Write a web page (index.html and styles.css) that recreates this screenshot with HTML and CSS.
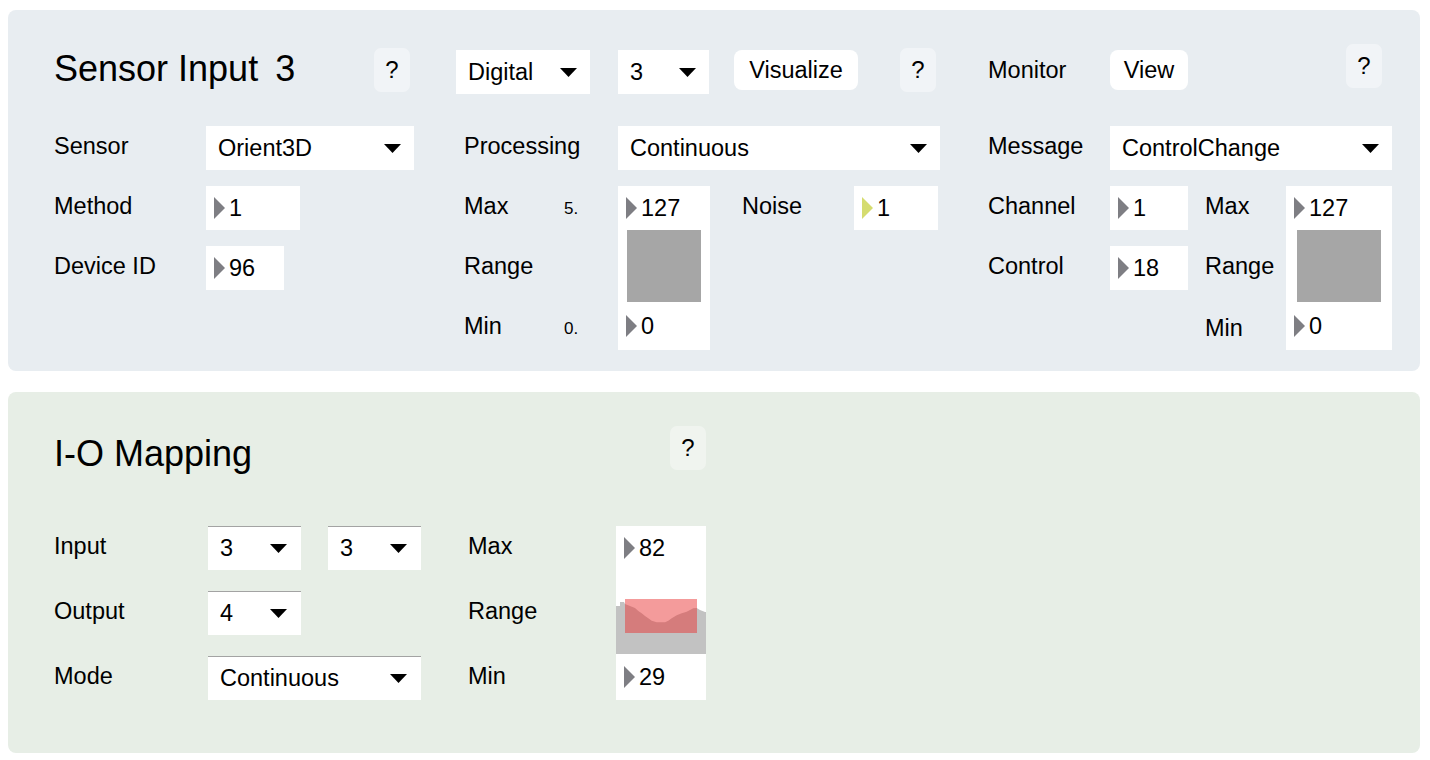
FILE: index.html
```html
<!DOCTYPE html>
<html>
<head>
<meta charset="utf-8">
<title>Sensor Input</title>
<link rel="stylesheet" href="styles.css">
</head>
<body>
<section class="panel panel-sensor">
  <div class="title-cell c1-2 r1">
    <h1 class="title">Sensor Input<span class="title-num">3</span></h1>
    <div class="help help-title">?</div>
  </div>
  <div class="dd hdr-ctl w134 c4 r1"><span>Digital</span><svg class="arrow" width="17" height="9" viewBox="0 0 17 9"><polygon points="0,0 17,0 8.5,9"/></svg></div>
  <div class="dd hdr-ctl w91 c5 r1"><span>3</span><svg class="arrow" width="17" height="9" viewBox="0 0 17 9"><polygon points="0,0 17,0 8.5,9"/></svg></div>
  <div class="btn btn-visualize c6 r1">Visualize</div>
  <div class="help help-mid c7 r1">?</div>
  <div class="lbl hdr-lbl c9 r1">Monitor</div>
  <div class="btn btn-view c10 r1">View</div>
  <div class="help help-right c11-12 r1">?</div>

  <div class="lbl c1 r2">Sensor</div>
  <div class="dd c2 r2"><span>Orient3D</span><svg class="arrow" width="17" height="9" viewBox="0 0 17 9"><polygon points="0,0 17,0 8.5,9"/></svg></div>
  <div class="lbl lbl-b c4 r2">Processing</div>
  <div class="dd c5-7 r2"><span>Continuous</span><svg class="arrow" width="17" height="9" viewBox="0 0 17 9"><polygon points="0,0 17,0 8.5,9"/></svg></div>
  <div class="lbl c9 r2">Message</div>
  <div class="dd c10-12 r2"><span>ControlChange</span><svg class="arrow" width="17" height="9" viewBox="0 0 17 9"><polygon points="0,0 17,0 8.5,9"/></svg></div>

  <div class="lbl c1 r3">Method</div>
  <div class="num w94 c2 r3"><svg class="tri" width="11" height="22" viewBox="0 0 11 22"><polygon points="0,0 11,11 0,22"/></svg><span>1</span></div>
  <div class="lbl lbl-b lbl-split c4 r3"><span class="lbl-name">Max</span><span class="small">5.</span></div>
  <div class="rbox c5 r3-5">
    <div class="num"><svg class="tri" width="11" height="22" viewBox="0 0 11 22"><polygon points="0,0 11,11 0,22"/></svg><span>127</span></div>
    <div class="sq sq-mid"></div>
    <div class="num num-fill"><svg class="tri" width="11" height="22" viewBox="0 0 11 22"><polygon points="0,0 11,11 0,22"/></svg><span>0</span></div>
  </div>
  <div class="lbl lbl-noise c6 r3">Noise</div>
  <div class="num num-noise w84 c7 r3"><svg class="tri" width="11" height="22" viewBox="0 0 11 22"><polygon points="0,0 11,11 0,22"/></svg><span>1</span></div>
  <div class="lbl c9 r3">Channel</div>
  <div class="num c10 r3"><svg class="tri" width="11" height="22" viewBox="0 0 11 22"><polygon points="0,0 11,11 0,22"/></svg><span>1</span></div>
  <div class="lbl lbl-out c11 r3">Max</div>
  <div class="rbox c12 r3-5">
    <div class="num"><svg class="tri" width="11" height="22" viewBox="0 0 11 22"><polygon points="0,0 11,11 0,22"/></svg><span>127</span></div>
    <div class="sq sq-out"></div>
    <div class="num num-fill"><svg class="tri" width="11" height="22" viewBox="0 0 11 22"><polygon points="0,0 11,11 0,22"/></svg><span>0</span></div>
  </div>

  <div class="lbl c1 r4">Device ID</div>
  <div class="num w78 c2 r4"><svg class="tri" width="11" height="22" viewBox="0 0 11 22"><polygon points="0,0 11,11 0,22"/></svg><span>96</span></div>
  <div class="lbl lbl-b c4 r4">Range</div>
  <div class="lbl c9 r4">Control</div>
  <div class="num c10 r4"><svg class="tri" width="11" height="22" viewBox="0 0 11 22"><polygon points="0,0 11,11 0,22"/></svg><span>18</span></div>
  <div class="lbl lbl-out c11 r4">Range</div>

  <div class="lbl lbl-b lbl-split c4 r5"><span class="lbl-name">Min</span><span class="small">0.</span></div>
  <div class="lbl lbl-out lbl-min-out c11 r5">Min</div>
</section>

<section class="panel panel-map">
  <h1 class="title title-map c1-3 r1">I-O Mapping</h1>
  <div class="help help-map c5 r1">?</div>

  <div class="lbl c1 r2">Input</div>
  <div class="pair c2 r2">
    <div class="dd dd-io w93"><span>3</span><svg class="arrow" width="17" height="9" viewBox="0 0 17 9"><polygon points="0,0 17,0 8.5,9"/></svg></div>
    <div class="dd dd-io w93"><span>3</span><svg class="arrow" width="17" height="9" viewBox="0 0 17 9"><polygon points="0,0 17,0 8.5,9"/></svg></div>
  </div>
  <div class="lbl c1 r3">Output</div>
  <div class="dd dd-io w93 c2 r3"><span>4</span><svg class="arrow" width="17" height="9" viewBox="0 0 17 9"><polygon points="0,0 17,0 8.5,9"/></svg></div>
  <div class="lbl c1 r4">Mode</div>
  <div class="dd dd-io c2 r4"><span>Continuous</span><svg class="arrow" width="17" height="9" viewBox="0 0 17 9"><polygon points="0,0 17,0 8.5,9"/></svg></div>

  <div class="lbl lbl-io c4 r2">Max</div>
  <div class="lbl lbl-io c4 r3">Range</div>
  <div class="lbl lbl-io c4 r4">Min</div>
  <div class="rbox rbox-io c5 r2-4">
    <div class="num"><svg class="tri" width="11" height="22" viewBox="0 0 11 22"><polygon points="0,0 11,11 0,22"/></svg><span>82</span></div>
    <div class="gap-28"></div>
    <svg class="graph" width="90" height="56" viewBox="0 0 90 56">
      <polygon class="graph-area" points="0,8 4,8 4,4 8,4 9,6 14,8 19,10 22.3,13 25.7,15.3 29,18 32.3,20.3 35.7,22.7 40.7,24.3 49,24.3 52.3,22.7 55.7,20.3 60.7,17.3 65.7,15.3 70.7,13.7 74,12 77.3,10.3 80.7,10 84,12 89,14 90,14 90,56 0,56"/>
      <rect class="graph-sel" x="9" y="1" width="72" height="34"/>
    </svg>
    <div class="num num-fill"><svg class="tri" width="11" height="22" viewBox="0 0 11 22"><polygon points="0,0 11,11 0,22"/></svg><span>29</span></div>
  </div>
</section>
</body>
</html>
```

FILE: styles.css
```css
* { box-sizing: border-box; }

body {
  margin: 8px;
  background: #ffffff;
  color: #000000;
  font-family: "Liberation Sans", Arial, Helvetica, sans-serif;
}

.panel {
  width: 1412px;
  border-radius: 8px;
  display: grid;
  padding-left: 46px;
}

.panel-sensor {
  margin-top: 2px;
  background: #e8edf1;
  padding-top: 40px;
  padding-bottom: 21px;
  grid-template-columns: 152px 208px 42px 162px 92px 144px 86px 48px 122px 78px 98px 106px;
  grid-template-rows: 60px 44px 44px 44px 44px;
  row-gap: 16px;
}

.panel-map {
  margin-top: 21px;
  background: #e7eee6;
  padding-top: 34px;
  padding-bottom: 53px;
  grid-template-columns: 154px 213px 47px 148px 90px;
  grid-template-rows: 79px 44px 44px 44px;
  row-gap: 21px;
}

/* grid placement */
.c1 { grid-column: 1; }
.c2 { grid-column: 2; }
.c4 { grid-column: 4; }
.c5 { grid-column: 5; }
.c6 { grid-column: 6; }
.c7 { grid-column: 7; }
.c9 { grid-column: 9; }
.c10 { grid-column: 10; }
.c11 { grid-column: 11; }
.c12 { grid-column: 12; }
.c1-2 { grid-column: 1 / 3; }
.c1-3 { grid-column: 1 / 4; }
.c5-7 { grid-column: 5 / 8; }
.c10-12 { grid-column: 10 / 13; }
.c11-12 { grid-column: 11 / 13; }
.r1 { grid-row: 1; }
.r2 { grid-row: 2; }
.r3 { grid-row: 3; }
.r4 { grid-row: 4; }
.r5 { grid-row: 5; }
.r3-5 { grid-row: 3 / 6; }
.r2-4 { grid-row: 2 / 5; }

/* widths */
.w78 { width: 78px; }
.w84 { width: 84px; }
.w91 { width: 91px; }
.w93 { width: 93px; }
.w94 { width: 94px; }
.w134 { width: 134px; }

/* title */
.title-cell {
  display: flex;
  align-items: flex-start;
  align-self: start;
}

.title {
  margin: -3px 0 0 0;
  font-size: 36px;
  line-height: 44px;
  font-weight: normal;
  white-space: nowrap;
}

.title-num { margin-left: 17px; }

.title-map {
  align-self: start;
  margin-top: 6px;
}

/* help buttons */
.help {
  width: 36px;
  height: 44px;
  border-radius: 7px;
  background: #f1f4f7;
  font-size: 24px;
  display: flex;
  align-items: center;
  justify-content: center;
  align-self: start;
}

.help-title { margin-left: auto; margin-right: 4px; margin-top: -2px; }
.help-mid { justify-self: end; margin-right: 4px; margin-top: -2px; }
.help-right { justify-self: end; margin-right: 10px; margin-top: -6px; }
.help-map { justify-self: end; background: #f0f4ef; }

/* buttons */
.btn {
  height: 40px;
  border-radius: 8px;
  background: #ffffff;
  font-size: 23.5px;
  display: flex;
  align-items: center;
  justify-content: center;
  align-self: start;
}

.btn-visualize { width: 124px; margin-left: 24px; }
.btn-view { width: 78px; }

/* labels */
.lbl {
  font-size: 23.5px;
  align-self: center;
  padding-bottom: 4px;
  white-space: nowrap;
}

.hdr-lbl {
  align-self: start;
  line-height: 44px;
  padding-bottom: 0;
  margin-top: -2px;
}

.lbl-b { padding-left: 8px; }
.lbl-noise { padding-left: 32px; }
.lbl-out { padding-left: 17px; }
.lbl-min-out { padding-bottom: 0; }

.lbl-split {
  display: flex;
  align-items: baseline;
}

.lbl-name { width: 100px; }

.small { font-size: 17px; }

/* dropdowns */
.dd {
  height: 44px;
  background: #ffffff;
  display: flex;
  align-items: center;
  justify-content: space-between;
  padding: 0 13px 0 12px;
  font-size: 23.5px;
  white-space: nowrap;
}

.hdr-ctl { align-self: start; }

.dd-io {
  border-top: 1px solid #a3a3a3;
  padding-right: 14px;
}

.arrow { fill: #000000; display: block; }

.pair {
  display: flex;
  gap: 27px;
}

/* numeric boxes */
.num {
  height: 44px;
  background: #ffffff;
  display: flex;
  align-items: center;
  font-size: 23.5px;
}

.tri {
  display: block;
  margin-left: 8px;
  margin-right: 4px;
  fill: #7e7e83;
  flex: none;
}

.num-noise .tri { fill: #d5dc6f; }

.rbox {
  background: #ffffff;
  display: flex;
  flex-direction: column;
}

.num-fill {
  flex: 1;
  height: auto;
}

.sq {
  height: 72px;
  background: #a6a6a6;
}

.sq-mid { margin: 0 9px; }
.sq-out { margin: 0 11px; }

.gap-28 { height: 28px; }

.graph { display: block; }
.graph-area { fill: #c2c2c2; }
.graph-sel { fill: rgb(233, 50, 50); fill-opacity: 0.49; }
```
